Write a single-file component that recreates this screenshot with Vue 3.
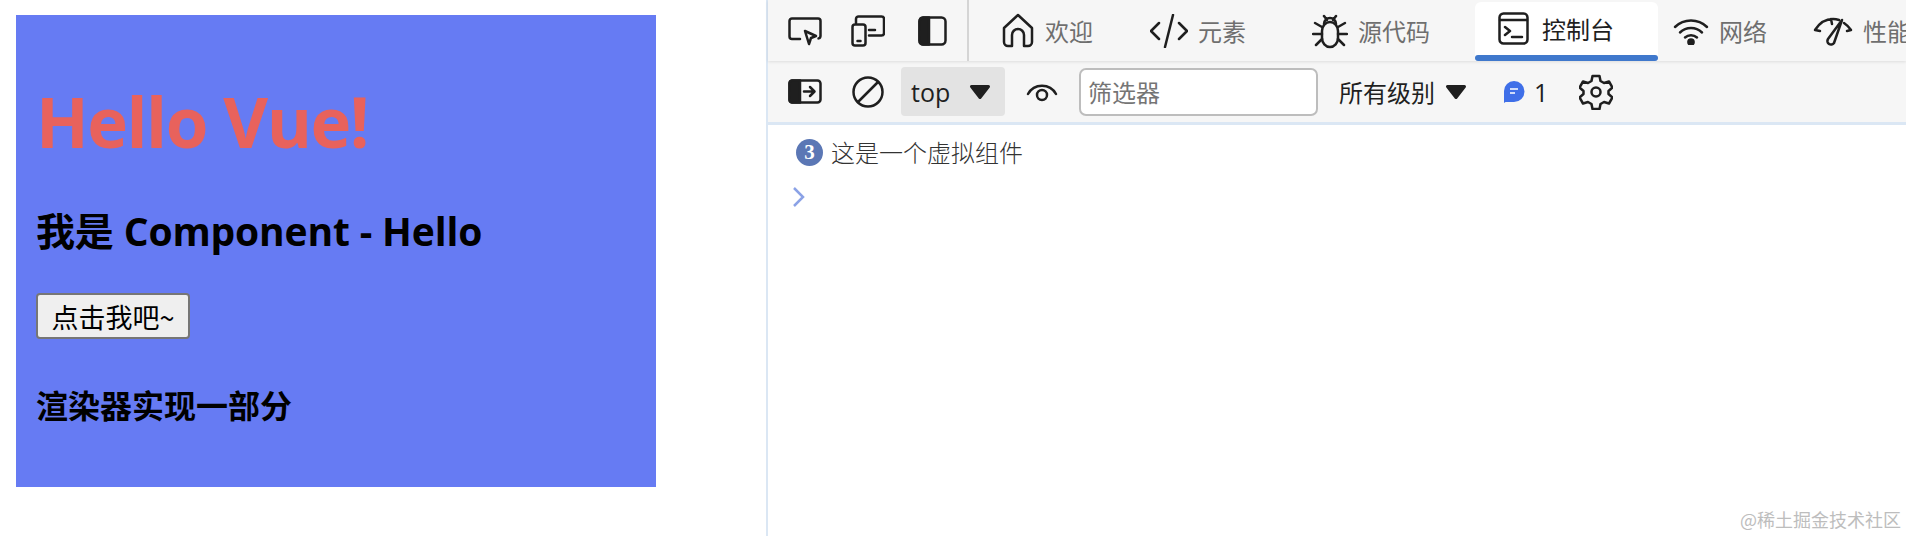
<template>
  <div class="page">
    <div class="preview">
      <div class="box">
        <h1>Hello Vue!</h1>
        <h2>我是 Component - Hello</h2>
        <button class="click-btn">点击我吧~</button>
        <h3>渲染器实现一部分</h3>
      </div>
    </div>

    <div class="devtools">
      <div class="tabbar">
        <div class="tools">
          <svg class="ic" width="34" height="30" viewBox="0 0 34 30"><path d="M12 23H4a2.500 2.500 0 0 1-2.500-2.500V5A2.500 2.500 0 0 1 4 2.500h26A2.500 2.500 0 0 1 32.500 5v15a2.500 2.500 0 0 1-2 2.400" /><path d="M17 15l11 5-5 2-2 6z" /></svg>
          <svg class="ic" width="34" height="32" viewBox="0 0 34 32"><path d="M5 8V4a2.500 2.500 0 0 1 2.500-2.500h23A2.500 2.500 0 0 1 33 4v14a2.500 2.500 0 0 1-2.500 2.500H18" /><path d="M18 15h6" /><rect x="1.500" y="9.500" width="13" height="21" rx="2.500" /><path d="M6.500 26h3" stroke-width="2.500" /></svg>
          <svg class="ic dock-ic" width="29" height="30" viewBox="0 0 29 30"><rect x="1.500" y="1.500" width="26" height="27" rx="4" /><path class="fill" d="M5 1.500h6v27H5a4 4 0 0 1-3.500-4v-19A4 4 0 0 1 5 1.500z" /></svg>
        </div>
        <div class="tabs">
          <div class="tab tab-home">
            <svg class="ic" width="32" height="36" viewBox="0 0 32 36"><path d="M10 33H6a4 4 0 0 1-4-4V15L16 2l14 13v14a4 4 0 0 1-4 4h-4V22a6 6 0 0 0-12 0z" /></svg>
            <span>欢迎</span>
          </div>
          <div class="tab tab-code">
            <svg class="ic" width="38" height="34" viewBox="0 0 38 34"><path d="M9 9l-8 8 8 8M29 9l8 8-8 8M23 1l-8 32" /></svg>
            <span>元素</span>
          </div>
          <div class="tab tab-src">
            <svg class="ic" width="36" height="36" viewBox="0 0 36 36"><path d="M10 18a8 9 0 0 1 16 0v7a8 9 0 0 1-16 0z" /><path d="M12 11a6 6 0 0 1 12 0M12 3l3 4M24 3l-3 4M10 14L3 10M26 14l7-4M10 21H1M26 21h9M10 26l-6 6M26 26l6 6" /></svg>
            <span>源代码</span>
          </div>
          <div class="tab active">
            <svg class="ic" width="31" height="33" viewBox="0 0 31 33"><rect x="1.500" y="1.500" width="28" height="30" rx="4" /><path d="M2 8h27M7 15l5 4-5 4M14 25h10" /></svg>
            <span>控制台</span>
          </div>
          <div class="tab tab-net">
            <svg class="ic" width="36" height="28" viewBox="0 0 36 28"><path d="M2 10a23 23 0 0 1 32 0M7 15.500a16 16 0 0 1 22 0M12 20.500a9 9 0 0 1 12 0" stroke-width="2.500" /><circle class="fill" cx="18" cy="25" r="2.600" /></svg>
            <span>网络</span>
          </div>
          <div class="tab tab-perf">
            <svg class="ic" width="40" height="32" viewBox="0 0 40 32"><path d="M2 15C7 7 13 4 20 4c2 0 4 .3 6 1M31 8c3 2 5 4 7 7M2 15l5 1M38 15l-4 1M18 4l1 5" /><path d="M29 5L15 24a3.500 3.500 0 0 0 6 4z" /></svg>
            <span>性能</span>
          </div>
        </div>
      </div>

      <div class="filterbar">
        <svg class="ic side-ic" width="34" height="25" viewBox="0 0 34 25"><rect x="1.500" y="1.500" width="31" height="22" rx="3" /><path class="fill" d="M4 1.500h8v22H4a3 3 0 0 1-2.500-3v-16A3 3 0 0 1 4 1.500z" /><path d="M16 12.500h10M22 8l4.500 4.500L22 17" /></svg>
        <svg class="ic block-ic" width="32" height="32" viewBox="0 0 32 32"><circle cx="16" cy="16" r="14.500" /><path d="M6 26L26 6" /></svg>
        <div class="context">
          <span>top</span>
          <svg class="arrow" width="22" height="16" viewBox="0 0 22 16"><path d="M2.500 2.500h17l-8.500 11z" /></svg>
        </div>
        <svg class="ic eye-ic" width="32" height="20" viewBox="0 0 32 20"><path d="M2 12a16 16 0 0 1 28 0" /><circle cx="16" cy="13" r="5" /></svg>
        <input class="filter" type="text" placeholder="筛选器" />
        <div class="levels">
          <span>所有级别</span>
          <svg class="arrow" width="22" height="16" viewBox="0 0 22 16"><path d="M2.500 2.500h17l-8.500 11z" /></svg>
        </div>
        <div class="issues">
          <svg width="22" height="24" viewBox="0 0 22 24"><path d="M11 1a10.500 10.500 0 0 1 0 21H2.500l-1.500 1V11A10 10 0 0 1 11 1z" fill="#3f6fe8" /><path d="M7 9h8M7 13h5" stroke="#cfdcfb" stroke-width="2" fill="none" /></svg>
          <span>1</span>
        </div>
        <svg class="ic gear-ic" width="34" height="36" viewBox="0 0 34 36"><path d="M13.500 2h7l1 5 3.500 2 5-1.500 3.500 6-4 3.500v3l4 3.500-3.500 6-5-1.500-3.500 2-1 5h-7l-1-5-3.500-2-5 1.500-3.500-6 4-3.500v-3l-4-3.500 3.500-6 5 1.500 3.500-2z" /><circle cx="17" cy="18" r="4.500" /></svg>
      </div>

      <div class="console">
        <div class="log">
          <span class="badge">3</span>
          <span class="msg">这是一个虚拟组件</span>
        </div>
        <svg class="prompt" width="14" height="22" viewBox="0 0 14 22"><path d="M2 2l9 9-9 9" /></svg>
        <span class="mark">@稀土掘金技术社区</span>
      </div>
    </div>
  </div>
</template>

<script setup>
</script>

<style>
body {
  margin: 0;
  overflow: hidden;
  background: #fff;
}
</style>

<style scoped>
.page {
  display: flex;
  width: 1906px;
  height: 536px;
  font-family: "Open Sans", "Noto Sans CJK SC", sans-serif;
}

.preview {
  width: 766px;
  flex: none;
  padding: 15px 0 0 16px;
  box-sizing: border-box;
}

.box {
  width: 640px;
  height: 472px;
  background: #667bf3;
  padding: 68px 0 0 20px;
  box-sizing: border-box;
  color: #000;
}

.box h1 {
  margin: 0;
  font-size: 69px;
  line-height: 76px;
  color: #e8625c;
  letter-spacing: -1.500px;
}

.box h2 {
  margin: 47px 0 0;
  font-size: 39px;
  line-height: 50px;
  letter-spacing: -0.150px;
}

.click-btn {
  display: block;
  margin-top: 37px;
  width: 154px;
  height: 46px;
  padding: 0;
  font-family: "Noto Sans CJK SC", sans-serif;
  font-size: 27px;
  background: #efefef;
  border: 2px solid #767676;
  border-radius: 4px;
  color: #000;
}

.box h3 {
  margin: 44px 0 0;
  font-size: 32px;
  line-height: 46px;
}

.devtools {
  flex: 1;
  min-width: 0;
  display: flex;
  flex-direction: column;
  border-left: 2px solid #dbe7f4;
  position: relative;
}

.ic {
  flex: none;
  fill: none;
  stroke: #1f1f1f;
  stroke-width: 2.500;
  stroke-linecap: round;
  stroke-linejoin: round;
}

.ic .fill {
  fill: #1f1f1f;
}

.tabbar {
  display: flex;
  height: 61px;
  background: #f6f6f6;
  box-shadow: 0 1px 3px rgba(0, 0, 0, 0.1);
  position: relative;
  overflow: hidden;
}

.tools {
  display: flex;
  align-items: center;
  gap: 29px;
  width: 201px;
  flex: none;
  padding-left: 20px;
  box-sizing: border-box;
  border-right: 2px solid #d5d5d5;
}

.dock-ic {
  margin-left: 4px;
}

.tabs {
  display: flex;
  flex: 1;
  min-width: 0;
}

.tab {
  display: flex;
  align-items: center;
  flex: none;
  font-family: "Noto Sans CJK SC", sans-serif;
  font-size: 24px;
  color: #6f6f6f;
  box-sizing: border-box;
  white-space: nowrap;
}

.tab-home {
  width: 181px;
  padding-left: 33px;
  gap: 11px;
}

.tab-code {
  width: 162px;
  gap: 10px;
}

.tab-src {
  width: 163px;
  gap: 10px;
}

.tab.active {
  width: 183px;
  margin-top: 2px;
  padding: 0 0 6px 23px;
  gap: 13px;
  background: #fff;
  color: #1f1f1f;
  border-radius: 6px 6px 0 0;
  position: relative;
}

.tab.active::after {
  content: "";
  position: absolute;
  left: 0;
  right: 0;
  bottom: 0;
  height: 6px;
  background: #3f78cc;
  border-radius: 3px;
}

.tab-net {
  width: 155px;
  padding-left: 15px;
  gap: 10px;
}

.tab-perf {
  gap: 10px;
}

.filterbar {
  display: flex;
  align-items: center;
  height: 61px;
  background: #f6f6f6;
  padding-left: 20px;
  box-sizing: border-box;
  font-family: "Noto Sans CJK SC", sans-serif;
  font-size: 24px;
  color: #1f1f1f;
}

.block-ic {
  margin-left: 30px;
}

.context {
  display: flex;
  align-items: center;
  justify-content: space-between;
  width: 104px;
  height: 49px;
  margin-left: 17px;
  padding: 0 14px 0 10px;
  box-sizing: border-box;
  background: #e3e3e3;
  border-radius: 4px;
  font-family: "Open Sans", sans-serif;
  font-size: 25px;
}

.arrow {
  flex: none;
  fill: #1f1f1f;
  stroke: #1f1f1f;
  stroke-width: 3;
  stroke-linejoin: round;
}

.eye-ic {
  margin-left: 21px;
}

.filter {
  width: 239px;
  height: 48px;
  margin-left: 21px;
  padding: 0 7px;
  box-sizing: border-box;
  border: 2px solid #bdbdbd;
  border-radius: 7px;
  background: #fff;
  font-family: "Noto Sans CJK SC", sans-serif;
  font-size: 24px;
  outline: none;
}

.filter::placeholder {
  color: #757575;
}

.levels {
  display: flex;
  align-items: center;
  gap: 10px;
  margin-left: 21px;
}

.issues {
  display: flex;
  align-items: center;
  gap: 9px;
  margin-left: 36px;
  font-family: "Open Sans", sans-serif;
  font-size: 25px;
}

.gear-ic {
  margin-left: 31px;
}

.console {
  flex: 1;
  border-top: 3px solid #dbe7f4;
  background: #fff;
  padding: 12px 0 0 28px;
}

.log {
  display: flex;
  align-items: center;
  gap: 8px;
  height: 30px;
}

.badge {
  width: 27px;
  height: 27px;
  flex: none;
  border-radius: 50%;
  background: #5b77b5;
  color: #fff;
  font: bold 21px/27px "Liberation Serif", serif;
  text-align: center;
}

.msg {
  font-family: "Noto Sans CJK SC", serif;
  font-size: 24px;
  font-weight: 300;
  line-height: 30px;
  color: #333;
}

.prompt {
  display: block;
  margin: 19px 0 0 -4px;
  fill: none;
  stroke: #8ba2e6;
  stroke-width: 2.500;
}

.mark {
  position: absolute;
  right: 5px;
  bottom: 4px;
  font-family: "Noto Sans CJK SC", sans-serif;
  font-size: 18px;
  line-height: 26px;
  color: #bdbdbd;
}
</style>
